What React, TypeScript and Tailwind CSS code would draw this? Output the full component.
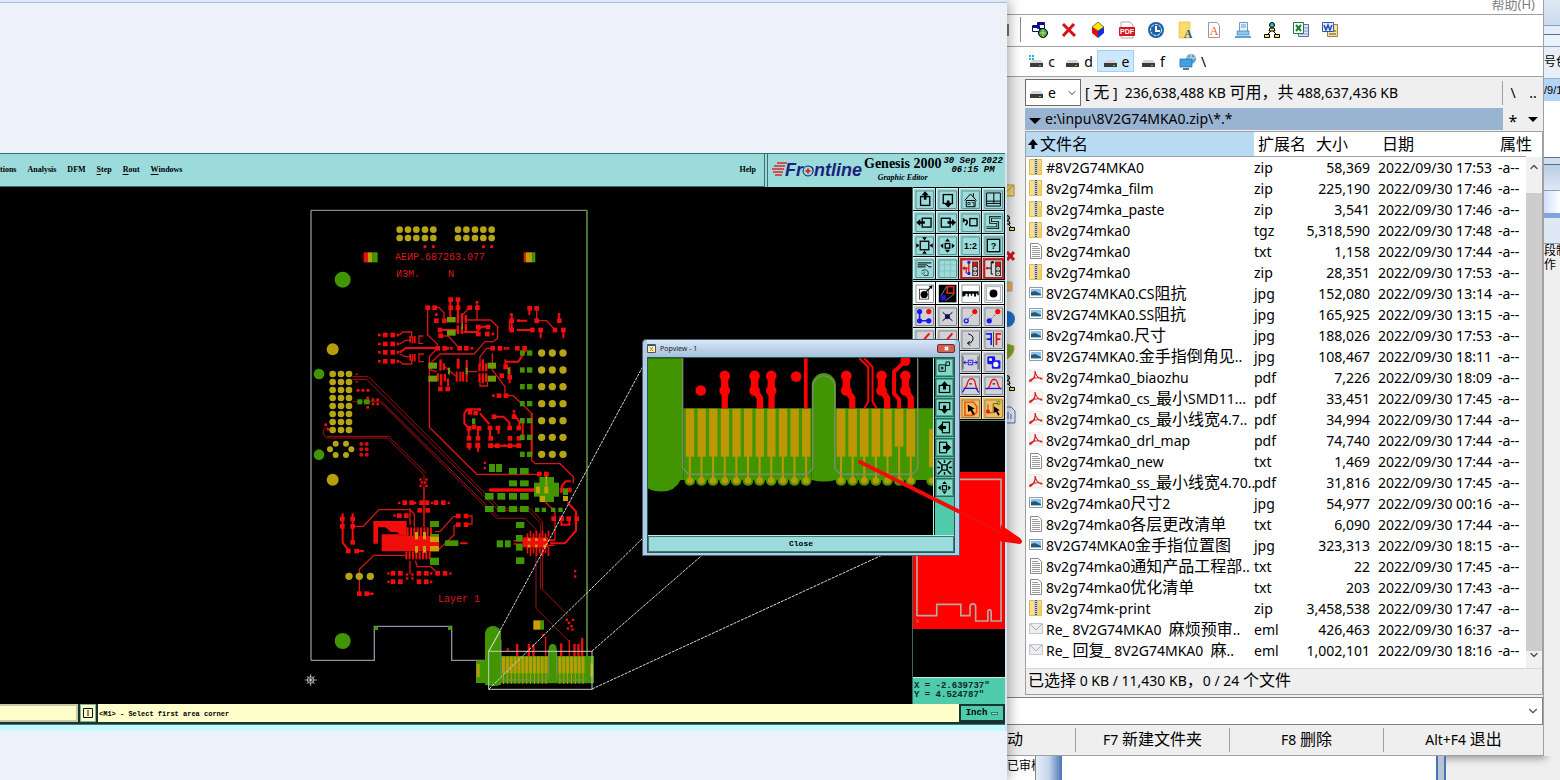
import type { ReactNode } from "react";
import { ChevronDown, ChevronUp } from "lucide-react";
import clsx from "clsx";

const RED = "#f20d0d";
const GREEN = "#419600";
const GOLD = "#b99d08";

type FileRow = [name: string, ext: string, size: string, date: string];

const files: FileRow[] = [
  ["#8V2G74MKA0", "zip", "58,369", "2022/09/30 17:53"],
  ["8v2g74mka_film", "zip", "225,190", "2022/09/30 17:46"],
  ["8v2g74mka_paste", "zip", "3,541", "2022/09/30 17:46"],
  ["8v2g74mka0", "tgz", "5,318,590", "2022/09/30 17:48"],
  ["8v2g74mka0", "txt", "1,158", "2022/09/30 17:44"],
  ["8v2g74mka0", "zip", "28,351", "2022/09/30 17:53"],
  ["8V2G74MKA0.CS阻抗", "jpg", "152,080", "2022/09/30 13:14"],
  ["8V2G74MKA0.SS阻抗", "jpg", "165,925", "2022/09/30 13:15"],
  ["8v2g74mka0.尺寸", "jpg", "188,026", "2022/09/30 17:53"],
  ["8V2G74MKA0.金手指倒角见..", "jpg", "108,467", "2022/09/30 18:11"],
  ["8v2g74mka0_biaozhu", "pdf", "7,226", "2022/09/30 18:09"],
  ["8v2g74mka0_cs_最小SMD11...", "pdf", "33,451", "2022/09/30 17:45"],
  ["8v2g74mka0_cs_最小线宽4.7..", "pdf", "34,994", "2022/09/30 17:44"],
  ["8v2g74mka0_drl_map", "pdf", "74,740", "2022/09/30 17:44"],
  ["8v2g74mka0_new", "txt", "1,469", "2022/09/30 17:44"],
  ["8v2g74mka0_ss_最小线宽4.70..", "pdf", "31,816", "2022/09/30 17:45"],
  ["8v2g74mka0尺寸2", "jpg", "54,977", "2022/09/30 00:16"],
  ["8v2g74mka0各层更改清单", "txt", "6,090", "2022/09/30 17:44"],
  ["8V2G74MKA0金手指位置图", "jpg", "323,313", "2022/09/30 18:15"],
  ["8v2g74mka0通知产品工程部..", "txt", "22", "2022/09/30 17:45"],
  ["8v2g74mka0优化清单", "txt", "203", "2022/09/30 17:43"],
  ["8v2g74mk-print", "zip", "3,458,538", "2022/09/30 17:47"],
  ["Re_ 8V2G74MKA0  麻烦预审..", "eml", "426,463", "2022/09/30 16:37"],
  ["Re_ 回复_ 8V2G74MKA0  麻..", "eml", "1,002,101", "2022/09/30 18:16"],
];

// Chinese runs are set one step larger than the latin text around them
function Mixed({ text }: { text: string }) {
  return (
    <>
      {text.split(/([\u3000-\u9fff\uff00-\uffef]+)/).map((part, i) =>
        i % 2 ? (
          <span key={i} className="text-base leading-none">
            {part}
          </span>
        ) : (
          part
        )
      )}
    </>
  );
}

/* ---------- board drawing, three units to a pixel ---------- */

type Box = [number, number, number, number];

function Boxes({ list, fill }: { list: Box[]; fill: string }) {
  return (
    <g fill={fill}>
      {list.map(([x, y, w, h], i) => (
        <rect key={i} x={x} y={y} width={w} height={h} />
      ))}
    </g>
  );
}

function Pads({ list, size = 14 }: { list: [number, number][]; size?: number }) {
  return (
    <g fill={RED}>
      {list.map(([x, y], i) => (
        <rect key={i} x={x} y={y} width={size} height={size} />
      ))}
    </g>
  );
}

function Dots({ xs, ys, r, fill }: { xs: number[]; ys: number[]; r: number; fill: string }) {
  return (
    <g fill={fill}>
      {ys.flatMap((y) => xs.map((x) => <circle key={`${x}-${y}`} cx={x} cy={y} r={r} />))}
    </g>
  );
}

const gridRows = [459, 510, 560, 611, 662, 712, 763];

function range(from: number, count: number, step: number) {
  return Array.from({ length: count }, (_, i) => from + i * step);
}

function BoardTop() {
  return (
    <g fill="none">
      <path d="M33 31H861" stroke="#a3aba3" strokeWidth="3" />
      <path d="M33 31V1381" stroke="#8f8f8f" strokeWidth="4" />
      <path d="M861 31V1370" stroke="#5d8a3c" strokeWidth="5" />

      {/* long diagonal traces */}
      <g stroke="#a01414" strokeWidth="3">
        <path d="M157 530H205L600 925H690L728 965V1170L805 1247" />
        <path d="M157 538H200L596 932H686L722 970V1168" />
        <path d="M157 605H240L590 955H675L708 988V1225L808 1325V1362" />
        <path d="M243 602L594 950" />
        <path d="M82 680L70 690V702L80 714H262L372 824V980" />
        <path d="M82 709H266L378 820" />
      </g>
      <g stroke="#d91414" strokeWidth="4">
        <path d="M383 322V405L412 432V445L388 470V682L530 823H715" />
        <path d="M500 360H572L593 380V415L580 425H555L522 462H420L392 490V510L410 515" />
        <path d="M404 322H417L432 338V355M509 322L487 345M531 306V360M418 408H445L478 445" />
        <path d="M577 445H560L540 470V500M577 460V510L615 560V580M620 587H640L695 640V780L705 791H780L820 830V850" />
        <path d="M299 405L308 396H335V412M299 432L316 421H330M299 484L308 492H335V478M299 462L316 470H330" />
        <path d="M370 408H357V430H370M372 462H357V485H372" />
        <path d="M434 500L452 515L470 530M500 515H532M540 545V558H562V545" />
        <path d="M710 325V362H740L765 390M628 362V390" />
      </g>
      <g stroke={RED} strokeWidth="6">
        <path d="M451 300V355M474 300V355M299 457L318 444H408M420 390H470M490 396H530L545 380H570" />
        <path d="M617 485H655L678 450M650 362H682M650 390H697M635 340V390M688 325V345M777 340V362M790 390V415M722 390V415" />
        <path d="M540 628H502L493 640V670L505 684M540 640L568 672M582 650H610L628 668V690M640 640L658 665V690M570 737H662M695 640V765" />
        <path d="M570 690V712M596 680V702M668 665V705M506 690V715M534 690V715M508 735V750M534 735V755" />
      </g>

      <Pads
        list={[
          [376, 316], [397, 316], [445, 292], [467, 292], [445, 316], [467, 316], [502, 316], [525, 316],
          [402, 355], [426, 355], [413, 383], [415, 400], [528, 374], [557, 374], [528, 395], [555, 395],
          [406, 438], [427, 438], [472, 438], [492, 438], [571, 438], [593, 438], [645, 438], [667, 438],
          [249, 398], [271, 398], [249, 425], [271, 425], [249, 450], [271, 450], [249, 477], [271, 477],
          [414, 560], [436, 560], [610, 493], [598, 520], [622, 525], [590, 580], [611, 580],
          [682, 318], [703, 318], [628, 355], [703, 355], [628, 383], [690, 383], [715, 383], [758, 383],
          [783, 383], [771, 355], [503, 630], [520, 632], [500, 678], [515, 674], [530, 678], [575, 643],
          [563, 677], [587, 677], [635, 643], [622, 677], [649, 677], [500, 708], [527, 708], [565, 708],
          [623, 708], [650, 708], [500, 730], [527, 730], [565, 730], [650, 730],
        ]}
      />
      <Pads
        size={8}
        list={[
          [234, 401], [290, 401], [234, 428], [290, 428], [234, 453], [290, 453], [234, 480], [290, 480],
          [527, 303], [405, 340], [440, 441], [450, 441], [512, 441], [575, 398], [611, 441], [620, 441],
          [576, 583], [535, 625], [630, 340], [773, 340], [652, 358], [638, 630], [610, 733], [590, 733],
          [215, 595], [229, 595], [215, 608], [229, 608], [199, 590], [199, 618], [73, 670], [80, 684],
        ]}
      />
      <Boxes
        fill={RED}
        list={[
          [470, 340, 7, 30], [482, 340, 7, 30], [494, 345, 7, 24], [470, 376, 7, 26], [482, 380, 7, 22], [494, 372, 7, 26],
          [328, 408, 5, 20], [335, 408, 5, 22], [342, 408, 5, 22], [328, 462, 5, 20], [335, 462, 5, 22], [342, 462, 5, 22],
          [418, 478, 7, 34], [428, 490, 7, 20], [410, 520, 7, 24], [420, 522, 7, 35], [431, 522, 7, 22], [441, 535, 6, 24],
          [470, 476, 9, 30], [467, 515, 6, 30], [478, 515, 6, 30], [486, 515, 6, 30], [497, 480, 6, 66],
          [535, 490, 7, 24], [545, 478, 7, 36], [555, 490, 7, 24], [535, 520, 7, 26], [545, 520, 7, 30], [555, 520, 7, 26],
          [613, 478, 6, 30], [626, 500, 6, 50],
        ]}
      />
      <Boxes
        fill={GREEN}
        list={[
          [172, 598, 15, 15], [192, 598, 17, 15], [217, 157, 16, 30], [697, 157, 9, 30], [516, 655, 10, 18],
          ...gridRows.flatMap((y): Box[] => [[660, y - 8, 14, 16], [681, y - 8, 16, 16]]),
        ]}
      />
      <Boxes
        fill="#6d9b06"
        list={[
          [441, 351, 26, 16], [441, 390, 26, 17], [385, 488, 26, 18], [385, 527, 26, 18], [563, 488, 25, 18],
          [563, 527, 25, 18], [484, 370, 5, 18], [444, 503, 6, 20], [497, 503, 6, 20], [623, 503, 6, 20],
        ]}
      />
      <Boxes fill={RED} list={[[191, 157, 12, 30], [671, 157, 6, 30]]} />
      <Boxes fill={GOLD} list={[[203, 157, 14, 30], [677, 157, 20, 30]]} />

      <Dots xs={[299, 324, 349, 375, 400, 474, 499, 525, 550, 575]} ys={[89, 114]} r={10} fill="#b5a416" />
      <Dots xs={[375, 400, 550, 575]} ys={[140]} r={5} fill={RED} />
      <Dots xs={[98, 123, 147]} ys={range(522, 8, 24)} r={10} fill="#b5a416" />
      <Dots xs={[725, 757, 789]} ys={gridRows} r={11} fill="#b5a416" />
      <Dots xs={[107, 138]} ys={[731, 765]} r={9} fill="#b5a416" />
      <Dots xs={[90, 154]} ys={[748]} r={9} fill="#b5a416" />
      <Dots xs={[98]} ys={[448, 839]} r={18} fill={GOLD} />
      <Dots xs={[57]} ys={[522, 764]} r={16} fill={GREEN} />
      <Dots xs={[128]} ys={[239, 1323]} r={24} fill={GREEN} />
      <Dots xs={[174, 189, 204]} ys={[571]} r={5} fill={RED} />
      <Dots xs={[170]} ys={[523, 545]} r={3} fill={RED} />
      <Dots xs={[184, 200]} ys={[732, 748, 764]} r={6} fill="#d01010" />
    </g>
  );
}

function BoardBottom() {
  return (
    <g fill="none">
      <path d="M33 661H223V559H455V661H556" stroke="#8f8fa0" strokeWidth="4" />
      <Boxes fill={GREEN} list={[[223, 559, 11, 11], [444, 559, 11, 11]]} />

      <g stroke="#d91414" strokeWidth="4">
        <path d="M158 259H190L237 209H330L343 222V260M330 205V255M405 275H420L460 230H475M412 332L462 285V258L475 252" />
        <path d="M316 346H222L178 388V455M346 362L352 380H392L410 396M330 362V402M505 228H516V252H505" />
        <path d="M730 180L765 215V300M372 140V262M745 300H765" />
      </g>
      <g stroke={RED} strokeWidth="6">
        <path d="M128 262V308L145 330M158 262V308M128 220V262M158 220V262M170 333H192M480 310H503M200 461H220M750 310H795L828 272V215L803 187" />
        <path d="M785 158V138L797 124H812M784 232V254H808V238" />
      </g>
      <path d="M571 150H715" stroke={RED} strokeWidth="11" strokeLinecap="round" />

      <Pads
        list={[
          [120, 230], [151, 230], [120, 252], [151, 252], [151, 300], [138, 326], [163, 326], [171, 454], [193, 454],
          [468, 221], [491, 221], [468, 247], [491, 247], [291, 220], [312, 220], [307, 181], [328, 181], [358, 181],
          [374, 181], [401, 181], [423, 181], [352, 204], [376, 204], [272, 393], [294, 393], [350, 393], [372, 393],
          [406, 393], [428, 393], [272, 418], [294, 418], [350, 418], [372, 418], [711, 95], [732, 95],
          [754, 229], [778, 229], [799, 229], [823, 229], [779, 143], [801, 143],
          [500, 8], [526, 8], [565, 10], [585, 10], [623, 10], [649, 10],
        ]}
      />
      <Pads
        size={7}
        list={[
          [294, 185], [342, 185], [393, 185], [443, 185], [280, 223], [183, 330], [213, 458], [262, 397], [262, 422],
          [390, 397], [390, 422], [448, 397], [358, 115], [376, 115], [362, 124], [372, 124], [358, 134], [376, 134],
          [318, 400], [334, 400], [318, 412], [334, 412], [551, 65], [551, 81], [822, 390], [822, 406],
          [797, 536], [816, 536], [803, 545], [811, 555], [800, 562], [814, 565], [620, 625], [725, 582],
        ]}
      />

      {/* power stage */}
      <path d="M220 243H320V290L302 286L290 276H272L256 262H234V311H220Z" fill={RED} />
      <path d="M245 283H305V288H417V334H245Z" fill={RED} />
      <Boxes
        fill={RED}
        list={[
          ...range(320, 8, 10).map((x): Box => [x, 262, 6, 26]),
          ...range(316, 8, 10).map((x): Box => [x, 334, 6, 24]),
          ...range(680, 8, 9).map((x, i): Box => [x, i % 2 ? 272 : 280, 5, 18]),
          ...range(680, 8, 9).map((x, i): Box => [x, 320, 5, i % 2 ? 28 : 20]),
          [668, 292, 76, 30], [640, 300, 28, 4], [640, 310, 28, 4], [742, 300, 22, 4], [742, 314, 22, 4],
          [648, 612, 7, 36], [683, 612, 7, 36], [697, 612, 7, 36], [735, 590, 4, 58], [780, 610, 7, 38], [806, 600, 4, 48],
          [820, 612, 7, 36], [832, 612, 7, 36], [843, 594, 7, 54],
        ]}
      />
      <Boxes
        fill={GREEN}
        list={[
          [567, 72, 18, 24], [588, 72, 18, 24], [627, 84, 24, 18], [660, 84, 26, 18], [627, 121, 24, 18], [660, 121, 26, 18],
          [555, 159, 26, 20], [592, 159, 24, 20], [627, 159, 24, 20], [660, 159, 26, 20], [555, 198, 26, 18],
          [592, 198, 24, 18], [627, 198, 24, 18], [660, 198, 26, 18], [702, 128, 75, 42], [718, 111, 44, 75],
          [705, 203, 13, 13], [725, 203, 13, 13], [753, 203, 13, 13], [775, 203, 13, 13], [648, 246, 25, 18],
          [648, 285, 20, 20], [648, 312, 20, 20], [648, 352, 25, 20], [590, 301, 19, 21], [615, 301, 17, 21],
          [390, 243, 27, 18], [390, 282, 27, 8], [390, 353, 27, 22], [435, 301, 40, 17], [789, 145, 15, 20], [722, 541, 10, 28],
        ]}
      />
      <Boxes
        fill="#c9a005"
        list={[
          [345, 276, 9, 22], [369, 276, 9, 22], [345, 318, 9, 20], [369, 318, 9, 20], [390, 290, 27, 16], [390, 318, 27, 16],
          [683, 295, 8, 8], [705, 295, 8, 8], [730, 295, 8, 8], [683, 314, 8, 8], [705, 314, 8, 8], [730, 314, 8, 8],
          [708, 140, 12, 20], [733, 140, 12, 20], [720, 168, 15, 18], [789, 168, 15, 15], [700, 541, 22, 28],
        ]}
      />
      <path d="M739 108V140" stroke={GOLD} strokeWidth="5" />
      <Dots xs={[147, 178, 211]} ys={[409]} r={11} fill="#b5a416" />

      {/* gold finger edge */}
      <g fill={GREEN}>
        <rect x="528" y="661" width="30" height="68" />
        <path d="M555 734V582A24 24 0 0 1 603 582V734Q580 742 555 734Z" />
        <path d="M603 648H746V626A12 14 0 0 1 770 626V648H882V730H603Z" />
      </g>
      <Boxes
        fill={GOLD}
        list={[
          [530, 672, 9, 40],
          ...range(606, 12, 11.6).map((x): Box => [x, 650, 9, 50]),
          ...range(775, 7, 11.6).map((x): Box => [x, 650, 9, 50]),
          [871, 670, 8, 40],
          ...range(609, 12, 11.6).map((x): Box => [x, 700, 3, 32]),
          ...range(778, 7, 11.6).map((x): Box => [x, 700, 3, 32]),
        ]}
      />
      <path d="M603 600V710L608 720H740L746 712V630M770 630V712L776 720H855L861 712" stroke="#7e8672" strokeWidth="3" />
      <rect x="566" y="634" width="310" height="114" stroke="#c8c8c8" strokeWidth="3" />
      <path d="M566 634L602 572" stroke="#c8c8c8" strokeWidth="3" />

      {/* datum */}
      <g stroke="#e8e8e8" strokeWidth="2">
        <circle cx="32" cy="720" r="10" />
        <path d="M14 720H50M32 702V738M20 708L44 732M44 708L20 732" />
      </g>
    </g>
  );
}

function Board() {
  return (
    <svg className="block" width="912" height="517" viewBox="0 0 912 517" role="img" aria-label="Layer 1">
      <g transform="translate(300 13) scale(0.33333)">
        <BoardTop />
        <g transform="translate(0 720)">
          <BoardBottom />
        </g>
      </g>
      <g fill="#dd1818" fontFamily="'Liberation Mono', monospace" fontSize="10">
        <text x="395" y="73">АЕИР.687263.077</text>
        <text x="396" y="90">ИЗМ.</text>
        <text x="448" y="90">N</text>
        <text x="438" y="415">Layer 1</text>
      </g>
      {/* rays from the picked area to the magnified view */}
      <g stroke="#d8d8d8" strokeDasharray="3 1">
        <path d="M489 464L648 170M489 502L648 346M592 464L930 170M592 502L930 346" />
      </g>
    </svg>
  );
}

/* ---------- tool palette ---------- */

const upArrow = <path d="M35 8L46 20H39V34H31V20H24Z" fill="#000" stroke="none" />;

const viewIcons: Record<string, ReactNode> = {
  "Pan up": <><rect x="21" y="24" width="28" height="27" />{upArrow}</>,
  "Pan down": <><rect x="20" y="18" width="28" height="27" /><path d="M35 57L46 46H39V36H31V46H24Z" fill="#000" stroke="none" /></>,
  Home: <><path d="M15 36L33 16L51 36M20 36H47V55H20ZM42 14V24" strokeWidth="3" /><path d="M25 42H32V48H25ZM37 42H43V55" strokeWidth="2" /></>,
  Windows: <path d="M12 13H54V53H12ZM34 13V45M12 38H54M12 45H54" strokeWidth="3" />,
  "Pan left": <><rect x="26" y="20" width="27" height="27" /><path d="M8 33L20 22V29H34V37H20V44Z" fill="#000" stroke="none" /></>,
  "Pan right": <><rect x="14" y="20" width="27" height="27" /><path d="M59 33L47 22V29H33V37H47V44Z" fill="#000" stroke="none" /></>,
  "Previous view": <><rect x="31" y="21" width="22" height="22" /><path d="M12 26H20Q27 32 18 41M12 20V32" strokeWidth="5" /></>,
  Serpentine: <><path d="M56 17H24V33H46V49H12" strokeWidth="8" /><path d="M56 17H24V33H46V49H12" stroke="#9bdbdb" strokeWidth="3" /></>,
  "Zoom in": <><rect x="20" y="20" width="26" height="26" /><path d="M33 18L26 8H40ZM33 48L26 58H40ZM18 33L8 26V40ZM48 33L58 26V40Z" fill="#000" stroke="none" /></>,
  "Zoom out": <><rect x="26" y="27" width="14" height="14" /><path d="M33 12L25 21H41ZM33 55L25 46H41ZM11 34L20 26V42ZM55 34L46 26V42Z" fill="#000" stroke="none" /></>,
  "Scale 1:2": <text x="33" y="43" textAnchor="middle" fontSize="27" fontWeight="700" fontFamily="'Liberation Sans', sans-serif" fill="#000" stroke="none">1:2</text>,
  Help: <><rect x="14" y="14" width="38" height="38" /><text x="33" y="43" textAnchor="middle" fontSize="28" fontWeight="700" fontFamily="'Liberation Sans', sans-serif" fill="#000" stroke="none">?</text></>,
  Setup: <><path d="M12 16H54M12 22H40L46 28H54M12 28H36" strokeWidth="3" /><path d="M24 40Q36 32 44 42V54H32L24 46M32 42V48" strokeWidth="2" /></>,
  Grid: <path d="M8 22H58M8 40H58M24 8V58M42 8V58" stroke="#7fb9b9" strokeWidth="2" />,
};

const netIcons: Record<string, ReactNode> = {
  "Net check": <><path d="M12 32H28M28 12V52M20 32V48" stroke="#e01010" /><circle cx="14" cy="32" r="5" fill="#e01010" stroke="none" /><circle cx="28" cy="14" r="5" fill="#1a1af0" stroke="none" /><circle cx="28" cy="48" r="5" fill="#1a1af0" stroke="none" /><rect x="38" y="12" width="18" height="44" fill="#333" stroke="none" /><circle cx="47" cy="20" r="7" fill="#e01010" stroke="none" /><circle cx="47" cy="34" r="4" stroke="#ddd" /><circle cx="47" cy="48" r="4" stroke="#ddd" /></>,
  "Net compare": <><path d="M14 32H26V14H32M26 32V50H32" strokeWidth="3" /><circle cx="14" cy="32" r="4" fill="#e01010" stroke="none" /><circle cx="30" cy="14" r="4" fill="#000" stroke="none" /><rect x="38" y="12" width="18" height="44" fill="#333" stroke="none" /><circle cx="47" cy="20" r="7" fill="#e01010" stroke="none" /><circle cx="47" cy="34" r="4" stroke="#ddd" /><circle cx="47" cy="48" r="4" stroke="#ddd" /></>,
};

const displayIcons: Record<string, ReactNode> = {
  "Display one": <><rect x="18" y="20" width="28" height="30" strokeWidth="2" /><circle cx="32" cy="36" r="11" fill="#000" stroke="none" /><path d="M38 28L54 12" /><path d="M57 8L56 20L46 11Z" fill="#000" stroke="none" /></>,
  Popview: <><rect x="7" y="7" width="52" height="52" fill="#000" stroke="none" /><rect x="32" y="12" width="20" height="20" stroke="#e02020" strokeWidth="5" /><rect x="14" y="40" width="12" height="12" fill="#1a1ad8" stroke="#1a1ad8" strokeWidth="4" /><path d="M14 38L30 12M28 54L54 34" stroke="#bbb" strokeWidth="2" /></>,
  Ruler: <path d="M8 26H58V38H54V34H50V42H44V34H38V40H34V34H28V42H24V34H18V40H14V42H8Z" fill="#000" stroke="none" />,
  "Select one": <><rect x="12" y="12" width="42" height="42" strokeWidth="2" strokeDasharray="3 3" /><circle cx="33" cy="33" r="12" fill="#000" stroke="none" /></>,
};

const editIcons: Record<string, ReactNode> = {
  "Add pads": <><path d="M18 18V46H46" stroke="#1a1af0" strokeWidth="5" /><g fill="#1a1af0" stroke="none"><circle cx="18" cy="18" r="8" /><circle cx="18" cy="46" r="8" /><circle cx="46" cy="46" r="8" /></g><circle cx="46" cy="18" r="8" fill={RED} stroke="none" /></>,
  Delete: <><circle cx="33" cy="33" r="8" fill="#1a1a90" stroke="none" /><path d="M18 20L48 46M48 20L18 46" strokeWidth="3" /></>,
  Move: <><circle cx="20" cy="46" r="6" stroke="#1a1af0" /><path d="M26 40L40 26" strokeWidth="2" strokeDasharray="3 3" /><circle cx="46" cy="18" r="8" fill={RED} stroke="none" /></>,
  Copy: <><circle cx="20" cy="46" r="8" fill="#1a1af0" stroke="none" /><path d="M26 40L40 26" strokeWidth="2" strokeDasharray="3 3" /><circle cx="46" cy="18" r="8" fill={RED} stroke="none" /></>,
  "Cut line": <path d="M24 42L48 14" stroke={RED} strokeWidth="6" />,
  "Trim line": <path d="M24 42L48 14" stroke={RED} strokeWidth="6" />,
  Rotate: <path d="M26 16Q44 20 40 34Q36 46 24 44M24 44L32 38M24 44L32 52" strokeWidth="3" />,
  Mirror: <><path d="M10 16H26V50M12 32H26" stroke="#1a1af0" strokeWidth="5" /><path d="M33 10V56" strokeWidth="2" /><path d="M56 16H42V50M54 32H42" stroke={RED} strokeWidth="5" /></>,
  Shrink: <path d="M10 18L30 46" stroke={RED} />,
  Grow: <path d="M10 18L30 46" stroke={RED} />,
  Spacing: <><path d="M10 14V54M56 14V54" strokeWidth="2" /><path d="M13 33H24M53 33H42M18 28L12 33L18 38M48 28L54 33L48 38M26 26H40V40H26ZM30 33H36" stroke="#1a1af0" strokeWidth="3" /></>,
  Resize: <><rect x="14" y="14" width="24" height="24" rx="4" fill="#1a1af0" stroke="none" /><rect x="28" y="26" width="26" height="26" rx="4" fill="#1a1af0" stroke="none" /><rect x="20" y="20" width="8" height="8" fill="#fff" stroke="none" /><circle cx="40" cy="39" r="8" fill="#fff" stroke="none" /></>,
  Polyline: <path d="M12 50H54" />,
  Surface: <path d="M12 50H54" />,
  "Arc up": <><path d="M12 42Q20 42 24 24Q28 12 38 12Q46 14 48 28Q50 42 56 44" stroke={RED} strokeWidth="4" /><path d="M8 54L16 42H50L58 54" stroke="#1a1af0" /><path d="M29 28H37" strokeWidth="3" /></>,
  "Arc flat": <><path d="M12 44Q20 42 24 26Q28 14 36 14Q44 16 46 28Q50 42 56 44" stroke={RED} strokeWidth="4" /><path d="M8 42H58" stroke="#1a1af0" /><path d="M30 28H38" strokeWidth="3" /></>,
};

const selectIcons: Record<string, ReactNode> = {
  "Select polygon": <><path d="M16 14H42L52 26V44L42 54H16Z" stroke="#ee5a10" strokeWidth="5" /><path d="M24 20L46 34L38 36L46 50L40 53L33 39L26 44Z" fill="#000" stroke="none" /></>,
  "Select net": <><path d="M16 20V48M16 46H32V18H48" stroke="#7a5a10" strokeWidth="3" /><circle cx="16" cy="42" r="6" fill={RED} stroke="none" /><circle cx="48" cy="16" r="5" stroke={GREEN} strokeWidth="3" /><path d="M34 26L52 38L45 40L52 52L47 55L41 43L35 47Z" fill="#000" stroke="none" /></>,
};

type Tone = "teal" | "alert" | "white" | "gray" | "amber";

function Tool({ label, tone, children }: { label: string; tone: Tone; children: ReactNode }) {
  return (
    <button
      type="button"
      aria-label={label}
      className={clsx(
        "size-[22px] border-t border-l border-white/70",
        tone === "teal" && "bg-[#9bdbdb]",
        tone === "alert" && "bg-[#c83030]",
        tone === "white" && "bg-white",
        tone === "gray" && "bg-[#d2d2d6]",
        tone === "amber" && "bg-[#f5bd62]"
      )}
    >
      <svg viewBox="1 1 64 64" className="block size-full" fill="none" stroke="#000" strokeWidth="4">
        <rect
          x="7"
          y="7"
          width="53"
          height="53"
          fill={tone === "alert" ? "#d8d8d8" : "none"}
          stroke={tone === "alert" ? "#701010" : "#4b6a6a"}
          strokeWidth="2"
        />
        {children}
      </svg>
    </button>
  );
}

function Tools({ icons, tone }: { icons: Record<string, ReactNode>; tone: Tone }) {
  return (
    <>
      {Object.entries(icons).map(([label, icon]) => (
        <Tool key={label} label={label} tone={tone}>
          {icon}
        </Tool>
      ))}
    </>
  );
}

function ToolPalette() {
  return (
    <div className="flex w-[93px] shrink-0 flex-col border-l border-[#3c6a60] bg-black">
      <div className="grid grid-cols-[repeat(4,22px)] gap-px pt-px">
        <Tools icons={viewIcons} tone="teal" />
        <Tools icons={netIcons} tone="alert" />
      </div>
      <div className="mt-px h-px bg-[#9bdbdb]" />
      <div className="grid grid-cols-[repeat(4,22px)] gap-px pt-px">
        <Tools icons={displayIcons} tone="white" />
        <Tools icons={editIcons} tone="gray" />
        <Tool label="Select rectangle" tone="amber">{null}</Tool>
        <Tool label="Select feature" tone="amber">{null}</Tool>
        <Tools icons={selectIcons} tone="amber" />
      </div>
      <div className="mt-px h-px bg-[#3c8a78]" />
      <div className="flex-1" />
      {/* overview */}
      <svg viewBox="0 0 279 471" className="block h-[157px] w-full" preserveAspectRatio="none">
        <rect width="279" height="471" fill="#fe0000" />
        <path
          d="M12 431V22H267V447H237V418A5 5 0 0 0 227 418V447H190V404A6 6 0 0 0 173 404V431H145V397H72V431Z"
          fill="none"
          stroke="#b9a8a0"
          strokeWidth="5"
        />
        <path d="M10 443L18 452M18 443L10 452" stroke="#d8a020" strokeWidth="2" />
      </svg>
      <div className="h-12" />
      <div className="h-[27px] border-t border-[#bff0e4] bg-[#4fcbab] pt-1 pl-px font-['Liberation_Mono',monospace] text-[9px] leading-[9px] font-bold whitespace-pre text-[#0a2a24]">
        <p>X = -2.639737"</p>
        <p>Y = 4.524787"</p>
      </div>
    </div>
  );
}

/* ---------- magnified view ---------- */

function FingerView() {
  const left = range(180, 11, 35);
  const right = range(635, 7, 35);
  return (
    <svg viewBox="54 82 858 531" className="block h-[177px] w-[286px] bg-black" fill="none">
      <g fill={GREEN}>
        <path d="M54 82H160V448H152Q135 483 95 483Q70 483 54 473Z" />
        <path d="M160 232H547V448H160ZM620 232H912V448H620Z" />
        <path d="M547 448V163A36 36 0 0 1 620 163V448Q583 458 547 448Z" />
        {[...left, ...right, 908].map((x) => (
          <circle key={x} cx={x} cy="450" r="16" />
        ))}
      </g>
      <g fill="#bd9706">
        {left.map((x) => (
          <rect key={x} x={x - 12} y="234" width="25" height="144" />
        ))}
        {right.map((x, i) => (
          <rect key={x} x={x - 13} y="234" width="26" height={i === 5 ? 114 : 144} />
        ))}
        <rect x="900" y="295" width="12" height="115" />
        {[...left, ...right].map((x) => (
          <g key={x}>
            <rect x={x - 3} y="345" width="6" height="100" />
            <circle cx={x} cy="450" r="10" />
          </g>
        ))}
        <circle cx="908" cy="450" r="9" />
      </g>
      <path
        d="M158 82V412L176 431H533L550 414V168A33 33 0 0 1 616 168V414L633 431H850L866 414V82"
        stroke="#7f8a72"
        strokeWidth="4"
      />
      <g fill="#ff0000">
        <circle cx="213" cy="179" r="16" />
        <circle cx="500" cy="137" r="16" />
        {[285, 375, 425, 651, 757, 829].map((x) => (
          <g key={x}>
            <circle cx={x} cy="135" r="16" />
            <circle cx={x} cy="179" r="16" />
            <rect x={x - 11} y="135" width="22" height="44" />
          </g>
        ))}
        <circle cx="829" cy="90" r="15" />
      </g>
      <g stroke="#ff0000" strokeWidth="19">
        <path d="M285 179V232M426 179V232M378 182L391 202V232M655 182L669 202V232M760 182L774 202V232M832 182L845 202V232" />
        <path d="M529 82V232" strokeWidth="11" />
        <path d="M690 82L717 108V212L706 232M705 82L730 108V212L742 232" strokeWidth="6" />
        <path d="M829 90L795 122V188L810 206V232" strokeWidth="12" />
      </g>
    </svg>
  );
}

const popTools: Record<string, ReactNode> = {
  "Pick area": <path d="M14 24H36V46H14ZM22 32H28V38H22ZM38 14H50V26H38Z" strokeWidth="3" />,
  "View up": <><rect x="15" y="26" width="36" height="24" /><path d="M33 12L46 26H38V40H28V26H20Z" fill="#000" stroke="none" /></>,
  "View down": <><rect x="15" y="16" width="36" height="24" /><path d="M33 54L46 40H38V26H28V40H20Z" fill="#000" stroke="none" /></>,
  "View left": <><rect x="26" y="15" width="24" height="36" /><path d="M10 33L24 20V28H38V38H24V46Z" fill="#000" stroke="none" /></>,
  "View right": <><rect x="16" y="15" width="24" height="36" /><path d="M56 33L42 20V28H28V38H42V46Z" fill="#000" stroke="none" /></>,
  "View in": <path d="M24 24H42V42H24ZM10 10L22 22M56 10L44 22M10 56L22 44M56 56L44 44M33 8V18M33 58V48M8 33H18M58 33H48" strokeWidth="5" />,
  "View out": viewIcons["Zoom out"],
};

function Popview() {
  return (
    <div className="absolute top-[152px] left-[642px] w-[318px] rounded-t border border-[#4d5f74] bg-[#b0cce8] px-1 pb-0.5">
      <div className="flex h-[17px] items-center bg-gradient-to-b from-[#d9e7f5] to-[#a5c0df] font-['Noto_Sans',sans-serif] text-[7px] text-[#222]">
        <svg viewBox="0 0 9 9" className="mr-1 size-[9px]">
          <path d="M0.5 0.5H8.5V8.5H0.5Z" fill="#f6f2c0" stroke="#555" />
          <path d="M1 1.5H8" stroke="#2a50b0" />
          <path d="M3 3L6 7M6 3L3 7" stroke="#b08a10" />
        </svg>
        Popview - 1
        <button type="button" aria-label="Close window" className="ml-auto flex h-[9px] w-[18px] items-center justify-center rounded-xs border border-[#7c2a22] bg-[#cf6053]">
          <svg viewBox="0 0 6 6" className="size-[5px]">
            <path d="M1 1L5 5M5 1L1 5" stroke="#fff" strokeWidth="2" />
          </svg>
        </button>
      </div>
      <div className="border border-[#245c50] bg-[#b9efe3]">
        <div className="flex gap-px">
          <FingerView />
          <div className="flex flex-1 flex-col gap-px border-l border-black bg-[#4fcbab]">
            {Object.entries(popTools).map(([label, icon]) => (
              <button key={label} type="button" aria-label={label} className="h-[19px] w-full border border-[#2b6e60] bg-[#7fd8c8]">
                <svg viewBox="4 4 58 58" className="mx-auto block size-[17px]" fill="none" stroke="#000" strokeWidth="4">
                  <rect x="6" y="6" width="54" height="54" stroke="#3c7a70" strokeWidth="2" />
                  {icon}
                </svg>
              </button>
            ))}
          </div>
        </div>
        <button
          type="button"
          className="mt-px block h-4 w-full border border-[#3c7a70] bg-[#9bdbdb] font-['Liberation_Mono',monospace] text-[8px] leading-none font-bold text-black"
        >
          Close
        </button>
      </div>
    </div>
  );
}

/* ---------- board editor window ---------- */

const menus: [string, string][] = [["A", "nalysis"], ["D", "FM"], ["S", "tep"], ["R", "out"], ["W", "indows"]];

function EditorHeader() {
  return (
    <header className="flex h-[34px] border-t border-[#3b6f70] bg-[#9bdbdb] font-['Liberation_Serif',serif] text-[8px] font-bold text-black">
      <nav className="mr-0.5 flex flex-1 items-center gap-[11px] border-r border-b border-[#3b6f70] pr-2">
        <a href="#actions">tions</a>
        {menus.map(([key, rest]) => (
          <a key={rest} href={`#${rest}`}>
            <span className={clsx(key !== "A" && key !== "D" && "underline underline-offset-2")}>{key}</span>
            {rest}
          </a>
        ))}
        <a href="#help" className="ml-auto">Help</a>
      </nav>
      <div className="flex w-[238px] border-l border-[#3b6f70] pl-1">
        <svg viewBox="0 0 92 32" className="h-8 w-[92px] shrink-0" role="img" aria-label="Frontline">
          <path d="M5 9H15M2 12H13M0 15H12M1 18H11M3 21H10" stroke="#e02828" strokeWidth="1.5" />
          <text x="13" y="22" fontFamily="'Liberation Sans', sans-serif" fontSize="18" fontWeight="700" fontStyle="italic" fill="#1b2378">
            Frontline
          </text>
          <circle cx="36" cy="17" r="5" fill="#9bdbdb" stroke="#1b2378" />
          <path d="M36 14.5V19.5M33.500 17H38.500" stroke="#e02828" strokeWidth="2" />
        </svg>
        <div className="pt-px text-center">
          <p className="text-[14px] leading-[17px] whitespace-nowrap">Genesis 2000</p>
          <p className="text-[8px] leading-3 italic">Graphic Editor</p>
        </div>
        <div className="ml-0.5 pt-[3px] font-['Liberation_Mono',monospace] text-[9px] leading-[9px] whitespace-nowrap italic">
          <p>30 Sep 2022</p>
          <p className="pl-2">06:15 PM</p>
        </div>
      </div>
    </header>
  );
}

function StatusBar() {
  return (
    <footer className="flex h-5 border-b-2 border-[#17352f] bg-[#ffffcc] font-['Liberation_Mono',monospace] font-bold text-black">
      <input aria-label="Command" className="w-[78px] border-2 border-l-0 border-[#c9c9a8] bg-[#ffffcc] text-[8px] outline-none" />
      <button type="button" aria-label="Interrupt" className="flex w-5 items-center justify-center border-x-2 border-[#17352f] bg-[#7fb59f]">
        <svg viewBox="0 0 14 16" className="h-4 w-[14px]" fill="none" stroke="#111">
          <path d="M0 0H14V16H0Z" fill="#ffffcc" stroke="none" />
          <path d="M2.500 3.500H11.500V12.500H2.500ZM7 5V11" />
        </svg>
      </button>
      <p className="flex-1 pt-px pl-px text-[7px] leading-[18px]">&lt;M1&gt; - Select first area corner</p>
      <button type="button" className="flex w-[46px] items-center justify-center gap-1 border-2 border-[#17352f] bg-[#4fcbab] text-[9px] leading-none">
        Inch
        <span className="h-[3px] w-[7px] border border-[#2b7e6a] bg-[#9be8d6]" />
      </button>
    </footer>
  );
}

function Editor() {
  return (
    <section className="relative z-10 flex min-w-0 flex-1 flex-col bg-[#edf2fa] shadow-[2px_0_12px_rgba(0,0,0,0.35)]">
      <div className="h-[3px] border-b border-[#a9bcd6] bg-[#dce8f6]" />
      <div className="h-[150px]" />
      <div className="flex flex-1 flex-col border-r-2 border-[#d5e4f0]">
        <EditorHeader />
        <div className="relative flex flex-1 bg-black">
          <div className="min-w-0 flex-1 overflow-hidden">
            <Board />
          </div>
          <ToolPalette />
          <Popview />
        </div>
        <StatusBar />
        <div className="h-[7px] border-t border-[#4c6f78] bg-[#c4fafc]" />
      </div>
      <div className="h-[49px]" />
    </section>
  );
}

/* ---------- file manager ---------- */

const treeNodes = (
  <g stroke="#000">
    <path d="M9 5V10M9 9L4 14M9 9L14 14" />
    <circle cx="9" cy="4" r="2.500" fill="#27b8c0" />
    <path d="M7 7H11L12 10H6Z" fill="#f4e04a" />
    <path d="M1.500 13.500H6.500V16.500H1.500ZM11.500 13.500H16.500V16.500H11.500Z" fill="#f4e04a" />
  </g>
);

const toolbarIcons: [string, ReactNode][] = [
  ["Network", <><path d="M6.500 1.500H13.500V7.500H6.500ZM1.500 4.500H8.500V10.500H1.500Z" fill="#fff" stroke="#10107a" /><path d="M2 6H8M7 3H13" stroke="#10107a" strokeWidth="2" /><circle cx="12" cy="12" r="4.500" fill="#35a060" stroke="#000" /><path d="M9 12H15M12 8V16" stroke="#e8d840" /></>],
  ["Delete", <path d="M3 3L15 15M14 3L3 15" stroke="#d8121c" strokeWidth="3" />],
  ["Colors", <><path d="M9 1L15 6L9 10L3 6Z" fill="#ffe600" stroke="#000" strokeWidth="0.5" /><path d="M3 6L9 10V17L3 12Z" fill="#e01010" /><path d="M15 6L9 10V17L15 12Z" fill="#1030e0" /></>],
  ["PDF", <><path d="M3 1H12L15 4V17H3Z" fill="#fff" stroke="#aaa" /><rect x="1" y="6" width="16" height="9" rx="1" fill="#d8141c" /><text x="9" y="13" textAnchor="middle" fontSize="7" fontWeight="700" fontFamily="'Liberation Sans', sans-serif" fill="#fff">PDF</text></>],
  ["Sync", <><circle cx="9" cy="9" r="8" fill="#1c62a8" /><circle cx="9" cy="9" r="5.500" fill="none" stroke="#fff" strokeDasharray="3 1" /><path d="M9 5V10H13" stroke="#fff" fill="none" strokeWidth="2" /></>],
  ["Font folder", <><path d="M3 1H14V17H3Z" fill="#fbdc6a" stroke="#d8a830" strokeWidth="0.500" /><text x="12" y="17" textAnchor="middle" fontSize="12" fontWeight="700" fontFamily="'Liberation Serif', serif" fill="#1d5f8c">A</text></>],
  ["Font file", <><path d="M3.500 1.500H12L14.500 4.500V16.500H3.500Z" fill="#fff" stroke="#999" /><text x="9" y="14" textAnchor="middle" fontSize="12" fontFamily="'Liberation Serif', serif" fill="#e8602c">A</text></>],
  ["Computer", <><path d="M5.500 1.500H13.500V10.500H5.500Z" fill="#e8f4fd" stroke="#6a9cc8" /><path d="M7 4H12M7 6H12" stroke="#6a9cc8" /><path d="M3 10H15V14H3Z" fill="#8cc8f0" stroke="#3c7cb0" strokeWidth="0.700" /><path d="M1 16H17" stroke="#5ca0d8" strokeWidth="2" /></>],
  ["Tree", treeNodes],
  ["Excel", <><path d="M6.500 3.500H16.500V15.500H6.500Z" fill="#dfe8f6" stroke="#5070a8" /><path d="M8 7H16M8 10H16M8 13H16" stroke="#7c98c8" /><path d="M1.500 1.500H11.500V12.500H1.500Z" fill="#fff" stroke="#227a3c" /><path d="M4 4L9 10M9 4L4 10" stroke="#1c7a38" strokeWidth="2" /></>],
  ["Word", <><path d="M6.500 3.500H16.500V15.500H6.500Z" fill="#f4e2b8" stroke="#a08040" /><path d="M8 10H15M8 13H15" stroke="#b89448" strokeWidth="2" /><path d="M1.500 1.500H12.500V10.500H1.500Z" fill="#e6eefc" stroke="#3458b0" /><path d="M3 4L5 9L7 4L9 9L11 4" stroke="#2448b0" strokeWidth="1.500" fill="none" /></>],
];

function DriveIcon({ system = false }: { system?: boolean }) {
  return (
    <svg viewBox="0 0 16 16" className="size-4 shrink-0">
      {system && <path d="M1 1H3V3H1ZM4 1H6V3H4ZM1 4H3V6H1ZM4 4H6V6H4Z" fill="#2bb3e8" />}
      <path d="M4 6H13L15 9H2Z" fill="#d4d4d4" />
      <path d="M2 9H15V13H2Z" fill="#3b3b3b" />
      <rect x="11" y="11" width="2" height="1" fill="#4be04b" />
    </svg>
  );
}

function FileIcon({ ext }: { ext: string }) {
  if (ext === "zip" || ext === "tgz")
    return (
      <svg viewBox="0 0 16 16" className="size-4 shrink-0">
        <path d="M1.500 0.500H13.500V15.500H1.500Z" fill="#f9e08a" stroke="#dcbb55" />
        <path d="M10.500 2V15.500H13.500V7" fill="#f3cf5e" />
        <path d="M6 0H10V15H6Z" fill="#c9c9c9" />
        <path d="M8 0V15" stroke="#555" strokeWidth="2" strokeDasharray="1 1" />
      </svg>
    );
  if (ext === "txt")
    return (
      <svg viewBox="0 0 16 16" className="size-4 shrink-0">
        <path d="M2.500 0.500H10.500L13.500 3.500V15.500H2.500Z" fill="#fff" stroke="#8a8a8a" />
        <path d="M4 3.500H10M4 5.500H12M4 7.500H12M4 9.500H12M4 11.500H12M4 13.500H12" stroke="#9a9a9a" />
      </svg>
    );
  if (ext === "jpg")
    return (
      <svg viewBox="0 0 16 16" className="size-4 shrink-0">
        <path d="M1.500 2.500H14.500V12.500H1.500Z" fill="#fff" stroke="#8f9aa5" />
        <path d="M3 4H13V11H3Z" fill="#8cc2ee" />
        <path d="M3 7L7 6L13 9V10H3Z" fill="#28586e" />
      </svg>
    );
  if (ext === "pdf")
    return (
      <svg viewBox="0 0 16 16" className="size-4 shrink-0">
        <path d="M1 0H12L15 3V14H1Z" fill="#f6f3f3" stroke="#d8d4d4" strokeWidth="0.500" />
        <path d="M7 2Q8 8 3 12Q1 13 2 11Q6 8 13 9Q15 10 13 10Q8 8 7 2Z" fill="none" stroke="#d42020" strokeWidth="1.200" />
      </svg>
    );
  return (
    <svg viewBox="0 0 16 16" className="size-4 shrink-0">
      <path d="M1.500 2.500H14.500V12.500H1.500Z" fill="#ebedf0" stroke="#c3c6ca" />
      <path d="M2 3L8 9L14 3" fill="none" stroke="#a8abb0" />
    </svg>
  );
}

// vertical button bar, mostly hidden behind the editor window
function ButtonGutter() {
  return (
    <div className="flex w-[18px] shrink-0 flex-col gap-[14px] bg-[#efefef] pt-[105px]">
      {[
        <path key="m" d="M-4 3H7V14H-4ZM7 3L-2 11" fill="#f4d774" stroke="#b8923a" />,
        <g key="t" transform="translate(-9 0)">{treeNodes}</g>,
        <path key="x" d="M0 6L7 14M7 6L0 14" stroke="#d8121c" strokeWidth="3" />,
        <path key="p" d="M-2 4H5V13H-2Z" fill="#f0b050" stroke="#a8a8a8" />,
        <circle key="i" cx="0" cy="9" r="8" fill="#1c70c8" />,
        <path key="s" d="M0 2L7 4Q8 12 0 17Z" fill="#78a828" stroke="#c8a828" />,
        <g key="u" transform="translate(-9 0)">{treeNodes}</g>,
        <path key="d" d="M-2 1H4L8 5V17H-2ZM1 6V13M4 8V13" fill="#e8ecfa" stroke="#5a6aa8" />,
      ].map((icon, i) => (
        <svg key={i} viewBox="0 0 18 18" className="block size-[18px]" fill="none">
          {icon}
        </svg>
      ))}
    </div>
  );
}

function FileTable() {
  return (
    <div className="flex bg-white">
      <table className="w-[501px] table-fixed border-collapse text-left whitespace-pre">
        <colgroup>
          <col className="w-[228px]" />
          <col className="w-[50px]" />
          <col className="w-[66px]" />
          <col className="w-[128px]" />
          <col />
        </colgroup>
        <thead>
          <tr className="h-6 border-b border-[#a0a0a0] text-base leading-none">
            <th className="bg-[#b9daf3] p-0 font-normal">
              <span className="flex items-center">
                <svg viewBox="0 0 14 14" className="size-[14px]">
                  <path d="M7 2L12 8H8.500V12H5.500V8H2Z" />
                </svg>
                文件名
              </span>
            </th>
            <th className="p-0 pl-1 font-normal">扩展名</th>
            <th className="p-0 pl-3 font-normal">大小</th>
            <th className="p-0 pl-3 font-normal">日期</th>
            <th className="p-0 pl-0.5 font-normal">属性</th>
          </tr>
        </thead>
        <tbody>
          {files.map(([name, ext, size, date], i) => (
            <tr key={i} className="h-[21px] leading-[21px]">
              <td className="p-0">
                <span className="flex h-[21px] items-center gap-0.5 pl-0.5">
                  <FileIcon ext={ext} />
                  <span>
                    <Mixed text={name} />
                  </span>
                </span>
              </td>
              <td className="p-0">{ext}</td>
              <td className="p-0 text-right">{size}</td>
              <td className="p-0 pl-2">{date}</td>
              <td className="p-0">-a--</td>
            </tr>
          ))}
        </tbody>
      </table>
      <div className="flex w-4 flex-col pt-[25px]">
        <button type="button" aria-label="Scroll up" className="flex h-9 justify-center bg-[#f0f0f0] pt-1 text-[#555]">
          <ChevronUp size={12} strokeWidth={3} />
        </button>
        <div className="flex-1 bg-[#cdcdcd]" />
        <button type="button" aria-label="Scroll down" className="flex h-[10px] items-end justify-center bg-[#f0f0f0] text-[#555]">
          <ChevronDown size={12} strokeWidth={3} />
        </button>
      </div>
    </div>
  );
}

const drives = ["c", "d", "e", "f"];

function FileManager() {
  return (
    <section className="flex w-[537px] shrink-0 flex-col border-r border-b border-[#a0a0a0] bg-[#efefef] shadow-[2px_2px_8px_rgba(0,0,0,0.4)]">
      <div className="flex h-[15px] items-end justify-end border-b border-[#a0a0a0] bg-white pr-2 text-[13px] leading-[20px] text-[#808080]">
        <a href="#help" className="h-5">帮助(H)</a>
      </div>
      <div className="flex h-8 items-center gap-[11px] border-b border-[#a0a0a0] bg-white pb-0.5">
        <span className="h-3 w-0.5 bg-[#8a7a50]" />
        <span className="-mr-px h-[25px] w-px bg-[#8a8a8a]" />
        {toolbarIcons.map(([label, icon]) => (
          <button key={label} type="button" aria-label={label}>
            <svg viewBox="0 0 18 18" className="block size-[18px]" fill="none">
              {icon}
            </svg>
          </button>
        ))}
      </div>
      <div className="flex h-[30px] items-center border-b border-[#a0a0a0] bg-white pb-px pl-4">
        {drives.map((d) => (
          <button
            key={d}
            type="button"
            className={clsx(
              "flex h-[22px] w-[37px] items-center justify-center gap-1 border pt-px",
              d === "e" ? "border-[#99d1ff] bg-[#cce8ff]" : "border-transparent"
            )}
          >
            <DriveIcon system={d === "c"} />
            {d}
          </button>
        ))}
        <button type="button" className="ml-2 flex items-center gap-1 pt-px">
          <svg viewBox="0 0 18 18" className="size-[18px]">
            <circle cx="12" cy="6" r="5" fill="#6aa4c8" />
            <path d="M8 4Q12 8 16 4M12 1V11" stroke="#d6ecf8" fill="none" />
            <path d="M1 6H13V14H1Z" fill="#3ea0e6" stroke="#1c64a0" strokeWidth="0.700" />
            <path d="M4 16H10" stroke="#5a7890" strokeWidth="2" />
          </svg>
          \
        </button>
      </div>

      <div className="flex">
        <ButtonGutter />
        <div className="min-w-0 flex-1">
          <div className="flex h-[31px] items-center">
            <label className="flex h-[27px] w-14 shrink-0 items-center border border-[#6b6b6b] bg-white pl-0.5">
              <DriveIcon />
              <select aria-label="Drive" defaultValue="e" className="w-5 appearance-none pl-1 outline-none">
                <option>e</option>
              </select>
              <ChevronDown size={12} className="ml-auto mr-0.5 text-[#444]" />
            </label>
            <p className="flex-1 pl-1 whitespace-pre">
              <Mixed text="[ 无 ]  236,638,488 KB 可用，共 488,637,436 KB" />
            </p>
            <span className="h-6 w-px bg-[#a0a0a0]" />
            <button type="button" className="w-5">\</button>
            <button type="button" className="w-5">..</button>
          </div>
          <div className="flex h-[22px] items-center">
            <button type="button" className="flex h-full flex-1 items-center bg-[#99b4d1] pl-1">
              <svg viewBox="0 0 12 6" className="mt-1 mr-1 h-[6px] w-3">
                <path d="M0 0H12L6 6Z" />
              </svg>
              e:\inpu\8V2G74MKA0.zip\*.*
            </button>
            <button type="button" className="w-5 pt-1 text-base leading-none">*</button>
            <button type="button" aria-label="History" className="flex w-5 justify-center">
              <svg viewBox="0 0 10 5" className="h-[5px] w-[10px]">
                <path d="M0 0H10L5 5Z" />
              </svg>
            </button>
          </div>
          <div className="mt-px border border-[#a0a0a0]">
            <FileTable />
            <div className="h-[7px] border-r-[16px] border-[#f0f0f0] bg-white" />
            <p className="h-[26px] border-t border-[#d8d8d8] pl-0.5 leading-6">
              <Mixed text="已选择 0 KB / 11,430 KB，0 / 24 个文件" />
            </p>
          </div>
        </div>
      </div>

      <label className="mt-0.5 flex h-7 items-center justify-end border border-l-0 border-[#828282] bg-white">
        <input aria-label="Command line" className="h-full flex-1 outline-none" />
        <ChevronDown size={14} className="mr-0.5 text-[#555]" />
      </label>
      <div className="flex flex-1 items-center py-0.5">
        <button type="button" className="w-[69px] overflow-hidden border-r border-[#a0a0a0] text-left leading-6">
          <Mixed text="动" />
        </button>
        <button type="button" className="w-[154px] border-r border-[#a0a0a0] leading-6"><Mixed text="F7 新建文件夹" /></button>
        <button type="button" className="w-[154px] border-r border-[#a0a0a0] leading-6"><Mixed text="F8 删除" /></button>
        <button type="button" className="flex-1 leading-6"><Mixed text="Alt+F4 退出" /></button>
      </div>
    </section>
  );
}

// sliver of the window behind the file manager
function BackEdge() {
  return (
    <aside className="min-w-0 flex-1 overflow-hidden bg-[#efefef] text-[13px] whitespace-nowrap">
      <div className="h-[26px] border-b border-[#8a9db5] bg-gradient-to-b from-[#dfe9f5] to-[#c9dbee]" />
      <div className="h-[9px] border-b border-[#5a6f8a] bg-[#e4eefa]" />
      <div className="h-3 border-b border-[#8a9db5] bg-[#eaf2fb]" />
      <div className="h-8 border-b border-[#8fb0d4] bg-[#e8eef6] text-xs leading-[30px]">号色</div>
      <div className="h-[22px] bg-[#b3d4f5] font-['Liberation_Sans',sans-serif] text-[11px] leading-[22px]">/9/1</div>
      <div className="h-14 bg-white" />
      <div className="h-2 border-y border-[#5a6f8a] bg-[#cfdcea]" />
      <div className="h-[25px] bg-gradient-to-b from-[#b8cde4] to-[#dfe9f5]" />
      <div className="h-[23px] border-t border-[#8a9db5] bg-gradient-to-r from-[#cfe0ff] to-white" />
      <div className="h-[5px] bg-[#7fa6dc]" />
      <div className="h-[26px] border-b border-[#8a9db5] bg-[#dfe9f5]" />
      <p className="text-xs leading-[14px]">
        段制
        <br />作
      </p>
    </aside>
  );
}

export default function App() {
  return (
    <main className="relative flex min-h-screen overflow-hidden bg-white font-['Noto_Sans','Noto_Sans_CJK_SC',sans-serif] text-sm text-black">
      <Editor />
      <div className="flex w-[553px] shrink-0 flex-col bg-[#efefef]">
        <div className="flex min-h-[756px] flex-1">
          <FileManager />
          <BackEdge />
        </div>
        <div className="flex h-6 overflow-hidden">
          <p className="w-7 overflow-hidden bg-white text-xs leading-5 whitespace-nowrap">已审核</p>
          <div className="w-[27px] border-l border-[#888] bg-gradient-to-r from-[#e8eef8] via-[#c5d4ea] to-[#4a74b4]" />
          <div className="flex-1 bg-white" />
          <div className="w-[10px] border-x-2 border-[#4a74b4] bg-[#b8c4d4]" />
          <div className="w-[114px]" />
        </div>
      </div>

      {/* hand-drawn pointer from the magnified view to the file row */}
      <svg className="pointer-events-none absolute top-[455px] left-[850px] z-20" width="180" height="95" viewBox="850 455 180 95">
        <path d="M860 462L962 513L1003 534" stroke="#f40a0a" strokeWidth="4" strokeLinecap="round" fill="none" />
        <path d="M1001 525L1020 538Q1024 542 1020 544L998 541Z" fill="#fe0000" />
      </svg>
    </main>
  );
}
